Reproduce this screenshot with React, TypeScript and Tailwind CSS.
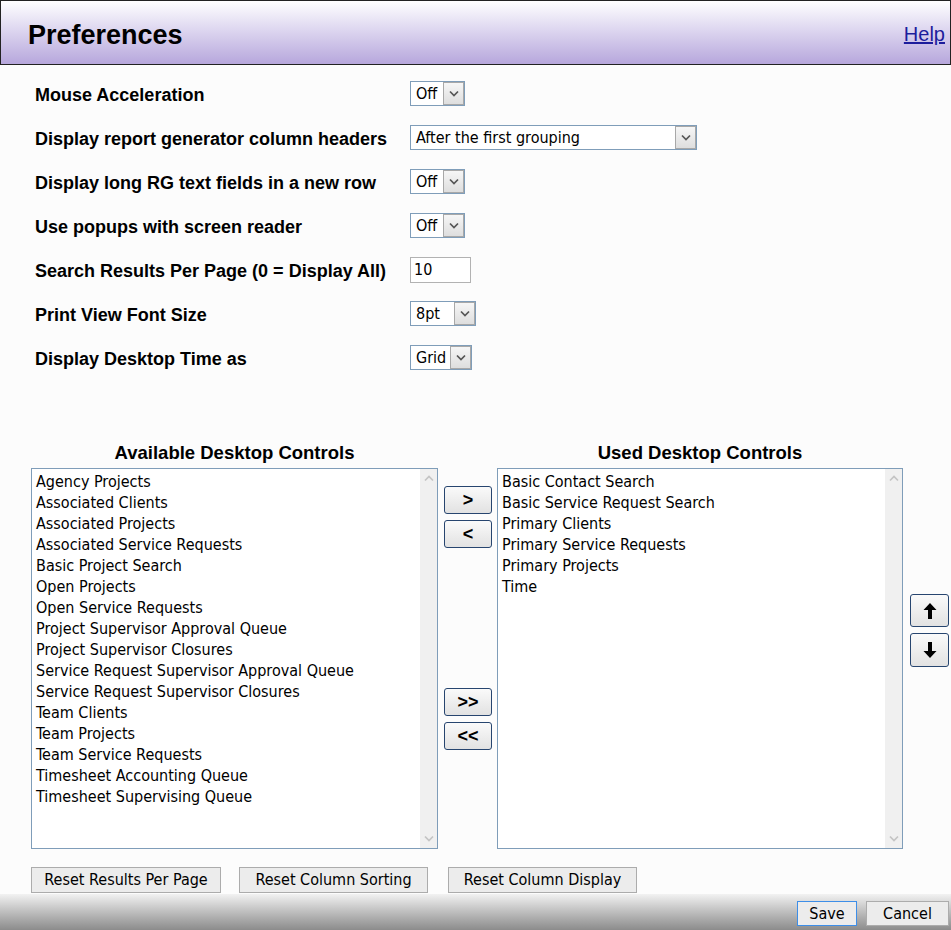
import React from 'react';

const available = [
  'Agency Projects',
  'Associated Clients',
  'Associated Projects',
  'Associated Service Requests',
  'Basic Project Search',
  'Open Projects',
  'Open Service Requests',
  'Project Supervisor Approval Queue',
  'Project Supervisor Closures',
  'Service Request Supervisor Approval Queue',
  'Service Request Supervisor Closures',
  'Team Clients',
  'Team Projects',
  'Team Service Requests',
  'Timesheet Accounting Queue',
  'Timesheet Supervising Queue',
];

const used = [
  'Basic Contact Search',
  'Basic Service Request Search',
  'Primary Clients',
  'Primary Service Requests',
  'Primary Projects',
  'Time',
];

const tahoma = "font-['DejaVu_Sans_Condensed','DejaVu_Sans',sans-serif] font-stretch-condensed";

const Chevron = ({ up }: { up?: boolean }) => (
  <svg width="10" height="7" viewBox="0 0 10 7" className={up ? 'rotate-180' : ''}>
    <path d="M1 1.5l4 4 4-4" fill="none" stroke="currentColor" strokeWidth="1.7" />
  </svg>
);

const Select = ({ value, width }: { value: string; width: string }) => (
  <div className={`flex h-[25px] items-stretch border border-[#7f9db9] bg-white ${width}`}>
    <span className={`flex-1 pl-[5px] text-[16px] leading-[23px] text-black ${tahoma}`}>{value}</span>
    <span className="flex w-[21px] items-center justify-center border border-[#a8a8a8] bg-gradient-to-b from-[#f6f6f6] to-[#dedede] text-[#555]">
      <Chevron />
    </span>
  </div>
);

const ListBox = ({ items }: { items: string[] }) => (
  <div className="flex h-[381px] border border-[#7f9db9] bg-white">
    <ul className={`flex-1 pl-[4px] pt-[2px] text-[16px] leading-[21px] text-black ${tahoma}`}>
      {items.map((i) => (
        <li key={i} className="whitespace-nowrap">{i}</li>
      ))}
    </ul>
    <div className="flex w-[17px] flex-col items-center justify-between bg-[#f0f0f0] py-[6px] text-[#c4c4c4]">
      <Chevron up />
      <Chevron />
    </div>
  </div>
);

const MoveButton = ({ children }: { children: React.ReactNode }) => (
  <button className="flex h-[28px] w-[48px] items-center justify-center rounded-[3px] border border-[#27456f] bg-gradient-to-b from-[#fafafa] to-[#e2e2e2] font-['Liberation_Sans',sans-serif] text-[18px] font-bold text-black">
    {children}
  </button>
);

const Arrow = ({ down }: { down?: boolean }) => (
  <svg width="14" height="18" viewBox="0 0 14 18" className={down ? 'rotate-180' : ''}>
    <path d="M7 1L0.5 8h4.5v9h4V8h4.5z" fill="#000" />
  </svg>
);

const rows: { label: string; control: React.ReactNode }[] = [
  { label: 'Mouse Acceleration', control: <Select value="Off" width="w-[55px]" /> },
  { label: 'Display report generator column headers', control: <Select value="After the first grouping" width="w-[287px]" /> },
  { label: 'Display long RG text fields in a new row', control: <Select value="Off" width="w-[55px]" /> },
  { label: 'Use popups with screen reader', control: <Select value="Off" width="w-[55px]" /> },
  {
    label: 'Search Results Per Page (0 = Display All)',
    control: (
      <div className={`h-[26px] w-[61px] border border-[#b2b2b2] bg-white pl-[3px] text-[16px] leading-[24px] ${tahoma}`}>10</div>
    ),
  },
  { label: 'Print View Font Size', control: <Select value="8pt" width="w-[66px]" /> },
  { label: 'Display Desktop Time as', control: <Select value="Grid" width="w-[62px]" /> },
];

export default function App() {
  return (
    <div className="flex h-[930px] w-[951px] flex-col overflow-hidden bg-[#fcfcfc]">
      {/* header */}
      <div className="flex h-[65px] shrink-0 items-center justify-between border border-[#222] bg-gradient-to-b from-white to-[#b7a7dc] pl-[27px] pr-[5px] font-['Liberation_Sans',sans-serif]">
        <h1 className="pt-[5px] text-[27px] font-bold text-black">Preferences</h1>
        <a href="#" className="pt-[2px] text-[20px] text-[#1d1d9c] underline">Help</a>
      </div>

      {/* settings rows */}
      <div className="flex flex-col gap-[19px] pl-[35px] pt-[16px] font-['Liberation_Sans',sans-serif]">
        {rows.map((r) => (
          <div key={r.label} className="flex h-[25px] items-center">
            <span className="w-[375px] pt-[4px] text-[18px] font-bold text-black">{r.label}</span>
            {r.control}
          </div>
        ))}
      </div>

      {/* desktop controls */}
      <div className="flex pl-[31px] pr-[2px] pt-[72px]">
        <div className="flex w-[407px] flex-col">
          <h2 className="mb-[4px] text-center font-['Liberation_Sans',sans-serif] text-[18.5px] font-bold leading-[22px]">Available Desktop Controls</h2>
          <ListBox items={available} />
        </div>
        <div className="ml-[6px] mr-[5px] flex w-[48px] flex-col gap-[6px] pt-[44px]">
          <MoveButton>&gt;</MoveButton>
          <MoveButton>&lt;</MoveButton>
          <div className="h-[128px]" />
          <MoveButton>&gt;&gt;</MoveButton>
          <MoveButton>&lt;&lt;</MoveButton>
        </div>
        <div className="flex w-[406px] flex-col">
          <h2 className="mb-[4px] text-center font-['Liberation_Sans',sans-serif] text-[18.5px] font-bold leading-[22px]">Used Desktop Controls</h2>
          <ListBox items={used} />
        </div>
        <div className="ml-[7px] flex w-[39px] flex-col gap-[6px] pt-[152px]">
          <button className="flex h-[33px] items-center justify-center rounded-[3px] border border-[#27456f] bg-gradient-to-b from-[#fafafa] to-[#e2e2e2]">
            <Arrow />
          </button>
          <button className="flex h-[34px] items-center justify-center rounded-[3px] border border-[#27456f] bg-gradient-to-b from-[#fafafa] to-[#e2e2e2]">
            <Arrow down />
          </button>
        </div>
      </div>

      {/* reset buttons */}
      <div className={`flex gap-[18px] pl-[31px] pt-[18px] text-[16px] ${tahoma}`}>
        <button className="h-[26px] w-[190px] border border-[#acacac] bg-[#ececec]">Reset Results Per Page</button>
        <button className="h-[26px] w-[189px] border border-[#acacac] bg-[#ececec]">Reset Column Sorting</button>
        <button className="ml-[2px] h-[26px] w-[189px] border border-[#acacac] bg-[#ececec]">Reset Column Display</button>
      </div>

      {/* footer */}
      <div className={`mt-auto flex h-[36px] items-center justify-end gap-[9px] bg-gradient-to-b from-[#f2f2f2] to-[#8c8c8c] pr-[2px] pt-[2px] text-[16px] ${tahoma}`}>
        <button className="h-[25px] w-[60px] border border-[#3d8ee8] bg-[#ececec]">Save</button>
        <button className="h-[25px] w-[83px] border border-[#acacac] bg-[#ececec]">Cancel</button>
      </div>
    </div>
  );
}
